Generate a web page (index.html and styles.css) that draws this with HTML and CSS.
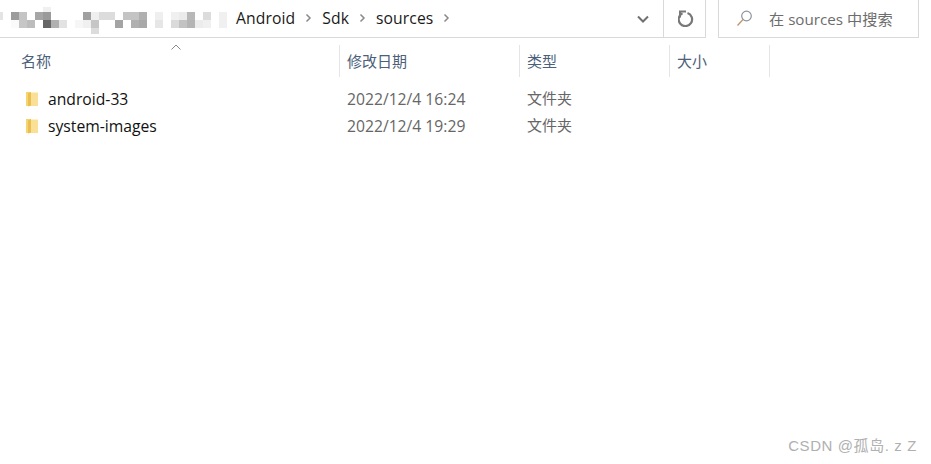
FILE: index.html
```html
<!DOCTYPE html>
<html>
<head>
    <meta charset="UTF-8">
    <title>sources</title>
    <link rel="stylesheet" href="styles.css">
</head>
<body>
    <div class="toolbar">
        <div class="address">
            <!-- pixelated part of the path -->
            <svg class="mosaic" width="228" height="34" viewBox="0 0 228 34">
                <rect x="0" y="10" width="3" height="8" fill="#e4e4e4"/>
                <rect x="43" y="5" width="8" height="5" fill="#f0f0f0"/>
                <rect x="11" y="10" width="8" height="8" fill="#9c9c9c"/>
                <rect x="19" y="10" width="8" height="8" fill="#c4c4c4"/>
                <rect x="35" y="10" width="8" height="8" fill="#a6a6a6"/>
                <rect x="43" y="10" width="8" height="8" fill="#9a9a9a"/>
                <rect x="11" y="18" width="8" height="8" fill="#fafafa"/>
                <rect x="19" y="18" width="8" height="8" fill="#c6c6c6"/>
                <rect x="27" y="18" width="8" height="8" fill="#bcbcbc"/>
                <rect x="43" y="18" width="8" height="8" fill="#666666"/>
                <rect x="51" y="18" width="8" height="8" fill="#b0b0b0"/>
                <rect x="59" y="18" width="8" height="8" fill="#e2e2e2"/>
                <rect x="83" y="10" width="8" height="8" fill="#a0a0a0"/>
                <rect x="91" y="10" width="8" height="8" fill="#efefef"/>
                <rect x="99" y="10" width="16" height="8" fill="#dcdcdc"/>
                <rect x="123" y="10" width="16" height="8" fill="#c4c4c4"/>
                <rect x="139" y="10" width="8" height="8" fill="#b0b0b0"/>
                <rect x="155" y="10" width="8" height="8" fill="#efefef"/>
                <rect x="171" y="10" width="8" height="8" fill="#f0f0f0"/>
                <rect x="179" y="10" width="8" height="8" fill="#ebebeb"/>
                <rect x="187" y="10" width="8" height="8" fill="#b8b8b8"/>
                <rect x="203" y="10" width="8" height="8" fill="#dcdcdc"/>
                <rect x="219" y="10" width="8" height="8" fill="#f0f0f0"/>
                <rect x="75" y="18" width="8" height="8" fill="#f6f6f6"/>
                <rect x="83" y="18" width="8" height="8" fill="#f0f0f0"/>
                <rect x="91" y="18" width="8" height="8" fill="#c6c6c6"/>
                <rect x="115" y="18" width="8" height="8" fill="#a4a4a4"/>
                <rect x="131" y="18" width="8" height="8" fill="#b0b0b0"/>
                <rect x="139" y="18" width="8" height="8" fill="#a8a8a8"/>
                <rect x="155" y="18" width="8" height="8" fill="#e6e6e6"/>
                <rect x="171" y="18" width="8" height="8" fill="#dadada"/>
                <rect x="179" y="18" width="8" height="8" fill="#c2c2c2"/>
                <rect x="187" y="18" width="8" height="8" fill="#b4b4b4"/>
                <rect x="195" y="18" width="8" height="8" fill="#ececec"/>
                <rect x="203" y="18" width="8" height="8" fill="#f0f0f0"/>
                <rect x="219" y="18" width="8" height="8" fill="#f0f0f0"/>
                <rect x="91" y="26" width="8" height="6" fill="#dcdcdc"/>
            </svg>
            <span class="crumb">Android</span>
            <svg class="sep" width="7" height="10" viewBox="0 0 7 10"><path d="M1.5 1.5l3.5 3.5-3.5 3.5" fill="none" stroke="#8a8a8a" stroke-width="1.5"/></svg>
            <span class="crumb">Sdk</span>
            <svg class="sep" width="7" height="10" viewBox="0 0 7 10"><path d="M1.5 1.5l3.5 3.5-3.5 3.5" fill="none" stroke="#8a8a8a" stroke-width="1.5"/></svg>
            <span class="crumb">sources</span>
            <svg class="sep" width="7" height="10" viewBox="0 0 7 10"><path d="M1.5 1.5l3.5 3.5-3.5 3.5" fill="none" stroke="#8a8a8a" stroke-width="1.5"/></svg>
            <div class="history">
                <svg width="12" height="8" viewBox="0 0 12 8"><path d="M1 1.5l5 5 5-5" fill="none" stroke="#707070" stroke-width="2"/></svg>
            </div>
        </div>
        <div class="refresh">
            <svg class="refresh-icon" width="16" height="17" viewBox="0 0 16 17"><path d="M4.5 3.3a6.7 6.7 0 1 0 5-.3" fill="none" stroke="#787878" stroke-width="2.2"/><path d="M1 0.5h7v2H3v5H1z" fill="#787878"/></svg>
        </div>
        <div class="search">
            <svg width="17" height="17" viewBox="0 0 17 17"><circle cx="10.5" cy="6" r="4.8" fill="none" stroke="#8c949c" stroke-width="1.2"/><path d="M7 9.5l-5.5 6" fill="none" stroke="#c4946a" stroke-width="1.3"/></svg>
            <span class="search-text">在 sources 中搜索</span>
        </div>
    </div>

    <div class="columns">
        <div class="col col-name">名称
            <svg class="sort" width="10" height="6" viewBox="0 0 10 6"><path d="M.5 5.5L5 1l4.5 4.5" fill="none" stroke="#8a8a8a" stroke-width="1"/></svg>
        </div>
        <div class="col col-date">修改日期</div>
        <div class="col col-type">类型</div>
        <div class="col col-size">大小</div>
    </div>

    <div class="files">
        <div class="file">
            <div class="col-name file-name">
                <svg class="folder" width="12" height="16" viewBox="0 0 12 16"><path d="M0 1h5v14H0z" fill="#f5d56f"/><path d="M5 1.5h7V15H5z" fill="#fae096"/><path d="M2 2.5l3-1.5v13.5l-3 1z" fill="#e9bf52"/></svg>
                <span>android-33</span>
            </div>
            <div class="col-date cell">2022/12/4 16:24</div>
            <div class="col-type cell type">文件夹</div>
        </div>
        <div class="file">
            <div class="col-name file-name">
                <svg class="folder" width="12" height="16" viewBox="0 0 12 16"><path d="M0 1h5v14H0z" fill="#f5d56f"/><path d="M5 1.5h7V15H5z" fill="#fae096"/><path d="M2 2.5l3-1.5v13.5l-3 1z" fill="#e9bf52"/></svg>
                <span>system-images</span>
            </div>
            <div class="col-date cell">2022/12/4 19:29</div>
            <div class="col-type cell type">文件夹</div>
        </div>
    </div>

    <div class="watermark">CSDN @孤岛. z Z</div>
</body>
</html>
```

FILE: styles.css
```css
body {
    margin: 0;
    height: 464px;
    overflow: hidden;
    position: relative;
    background-color: #fff;
    font-family: "Open Sans", "Noto Sans CJK SC", sans-serif;
    font-size: 15.7px;
}

.toolbar {
    display: flex;
    height: 38px;
}

.address {
    display: flex;
    align-items: center;
    width: 664px;
    border-bottom: 1px solid #d9d9d9;
    border-right: 1px solid #d9d9d9;
    box-sizing: border-box;
}

.mosaic {
    flex: none;
    margin-right: 8px;
}

.crumb {
    color: #1a1a1a;
    margin-top: -2px;
    letter-spacing: 0.1px;
}

.sep {
    margin: -1px 10px 0 10px;
}

.history {
    margin-left: auto;
    margin-right: 14px;
    display: flex;
}

.refresh {
    width: 42px;
    box-sizing: border-box;
    display: flex;
    align-items: center;
    justify-content: center;
    border-bottom: 1px solid #d9d9d9;
    border-right: 1px solid #d9d9d9;
}

.refresh-icon {
    margin-left: 2px;
}

.search {
    width: 201px;
    margin-left: 12px;
    box-sizing: border-box;
    display: flex;
    align-items: center;
    padding-left: 17px;
    border-left: 1px solid #d9d9d9;
    border-right: 1px solid #d9d9d9;
    border-bottom: 1px solid #d9d9d9;
}

.search-text {
    margin-left: 16px;
    margin-top: -2px;
    color: #6d6d6d;
    font-size: 15.2px;
}

.columns {
    display: flex;
    height: 32px;
    margin-top: 7px;
}

.col {
    position: relative;
    box-sizing: border-box;
    padding-left: 7px;
    padding-top: 5px;
    border-right: 1px solid #e5e5e5;
    color: #4c607a;
    font-size: 15px;
}

.col-name {
    width: 340px;
    padding-left: 21px;
    box-sizing: border-box;
}

.col-date {
    width: 180px;
}

.col-type {
    width: 150px;
}

.col-size {
    width: 100px;
}

.sort {
    position: absolute;
    left: 171px;
    top: -1px;
}

.files {
    margin-top: 8px;
}

.file {
    display: flex;
    align-items: center;
    height: 27px;
}

.file-name {
    display: flex;
    align-items: center;
    padding-left: 26px;
}

.file-name span {
    margin-left: 10px;
    color: #111;
}

.cell {
    padding-left: 7px;
    box-sizing: border-box;
    color: #666;
}

.type {
    font-size: 15px;
    margin-top: -2px;
}

.watermark {
    position: absolute;
    right: 14px;
    bottom: 9px;
    color: #b0b0b0;
    font-size: 15px;
    font-family: "Liberation Sans", "Noto Sans CJK SC", sans-serif;
    letter-spacing: 0.6px;
}
```
